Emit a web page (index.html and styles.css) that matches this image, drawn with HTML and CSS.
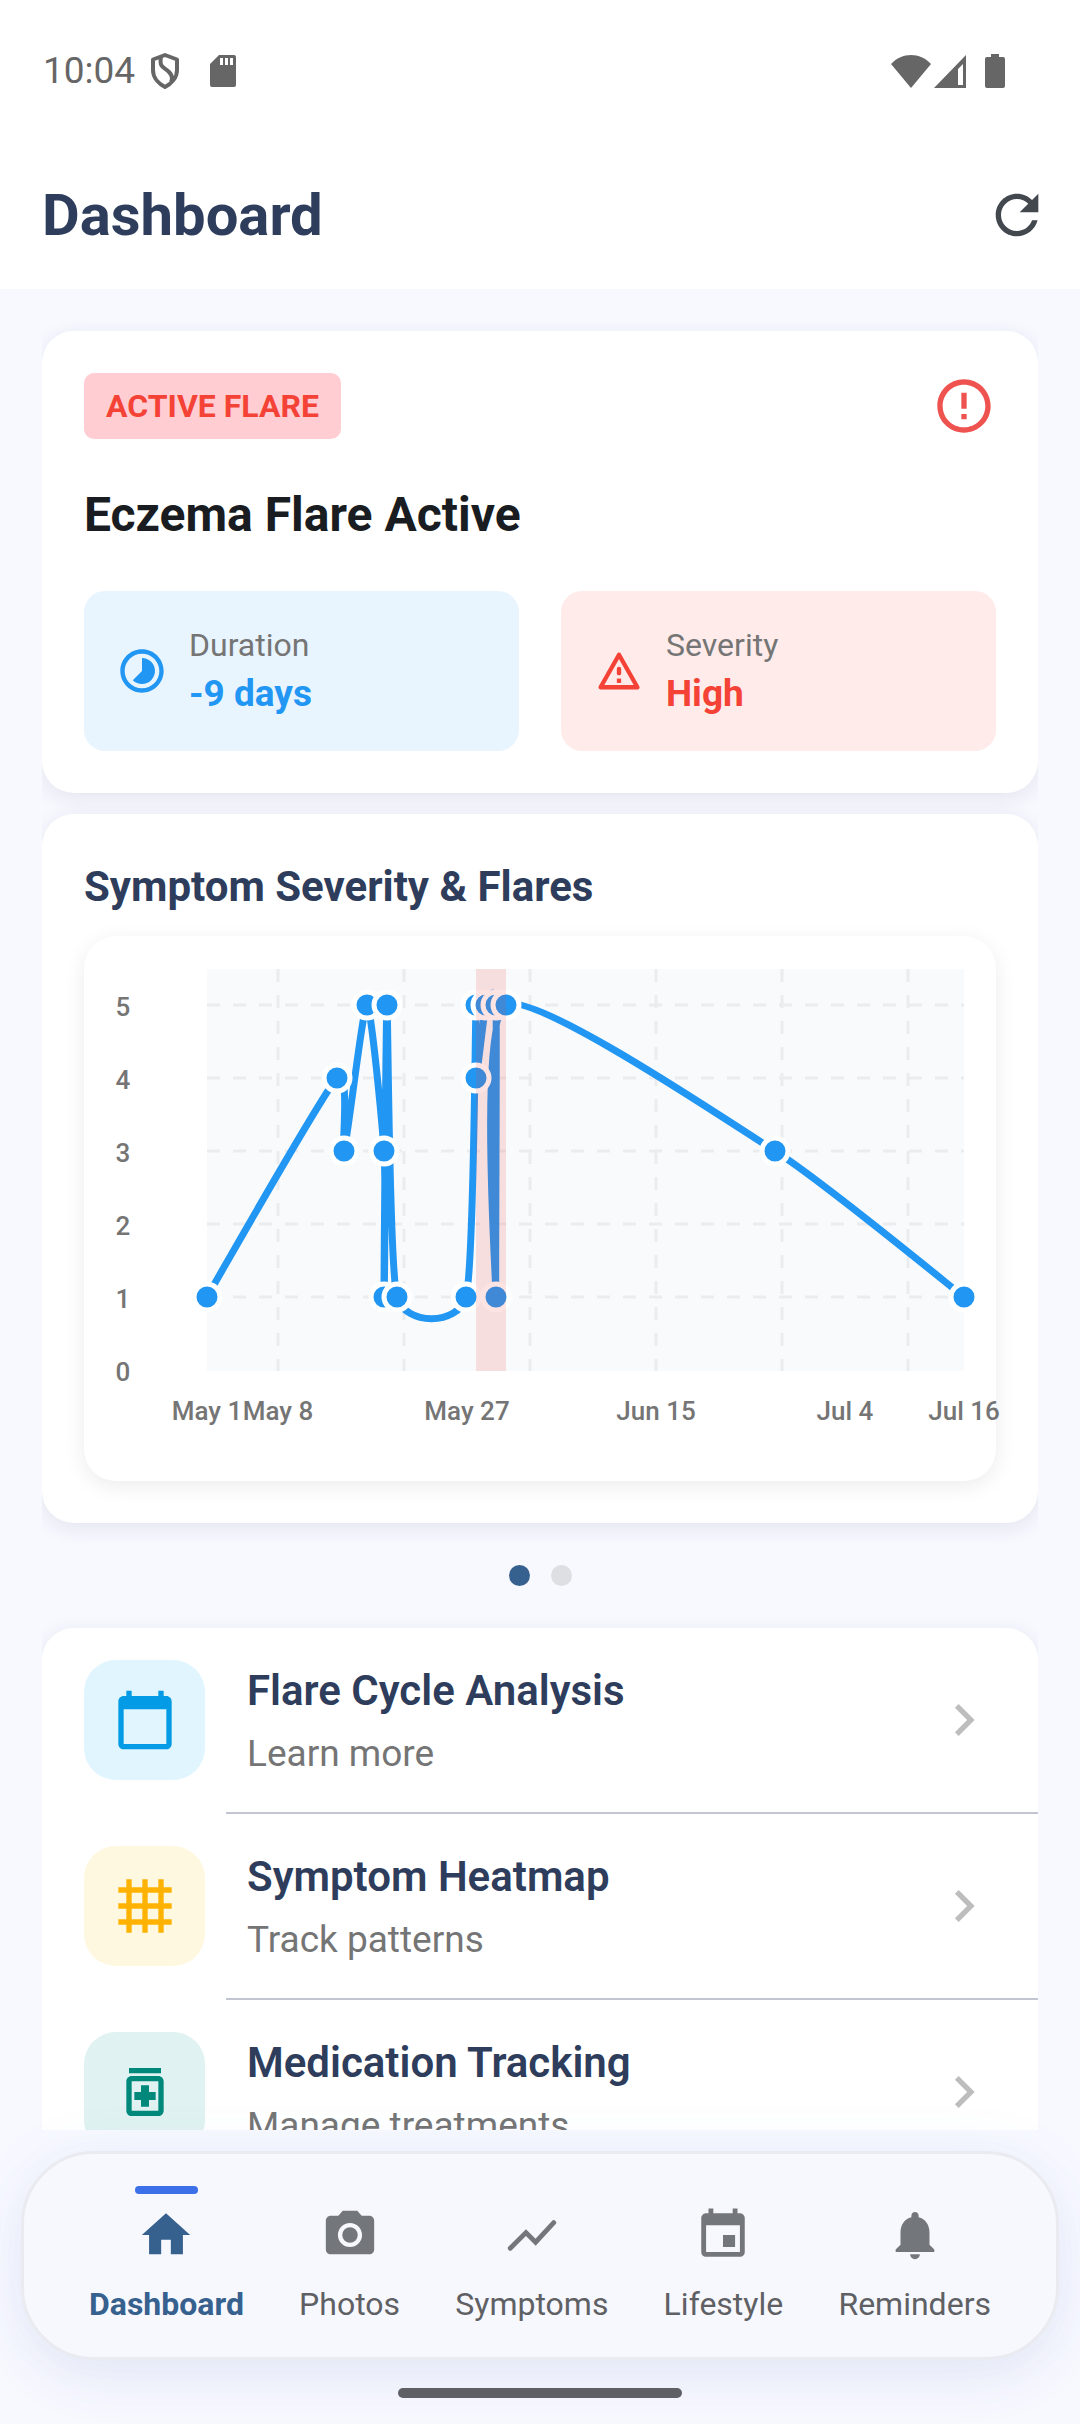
FILE: index.html
```html
<!DOCTYPE html>
<html lang="en">
<head>
<meta charset="utf-8">
<meta name="viewport" content="width=device-width, initial-scale=1">
<title>Dashboard</title>
<link rel="stylesheet" href="styles.css">
</head>
<body>
<header class="top">
  <div class="status">
    <span class="status-time">10:04</span>
    <svg class="status-shield" viewBox="0 0 30 36" aria-hidden="true"><path d="M15 2 27 6.500V17c0 8-6 14-12 17C9 31 3 25 3 17V6.500zM11 4c-2 11 3 10 8 15 3 3 4 6 2 10" fill="none" stroke="currentColor" stroke-width="4" stroke-linejoin="round"/></svg>
    <svg class="status-sd" viewBox="0 0 26 32" aria-hidden="true"><path fill="currentColor" fill-rule="evenodd" d="M9 0h15a2 2 0 0 1 2 2v28a2 2 0 0 1-2 2H2a2 2 0 0 1-2-2V9zM10 3v7h3V3zM15 3v7h3V3zM20 3v7h3V3z"/></svg>
    <span class="status-space"></span>
    <svg class="status-wifi" viewBox="0 0 40 33" aria-hidden="true"><path fill="currentColor" d="M20 33 0 9C11-3 29-3 40 9z"/></svg>
    <svg class="status-signal" viewBox="0 0 32 33" aria-hidden="true"><path fill="currentColor" fill-rule="evenodd" d="M0 33 32 0v33zM24 14v16h5V9z"/></svg>
    <svg class="status-battery" viewBox="0 0 20 34" aria-hidden="true"><path fill="currentColor" d="M6 0h8v3h4a2 2 0 0 1 2 2v27a2 2 0 0 1-2 2H2a2 2 0 0 1-2-2V5a2 2 0 0 1 2-2h4z"/></svg>
  </div>
  <div class="app-bar">
    <h1 class="app-title">Dashboard</h1>
    <button class="icon-button" type="button" aria-label="Refresh">
      <svg class="icon-lg" viewBox="0 0 24 24"><path fill="currentColor" d="M17.650 6.350C16.200 4.900 14.210 4 12 4c-4.420 0-7.990 3.580-7.990 8s3.570 8 7.990 8c3.730 0 6.840-2.550 7.730-6h-2.080c-.82 2.330-3.040 4-5.650 4-3.310 0-6-2.690-6-6s2.690-6 6-6c1.660 0 3.140.69 4.220 1.780L13 11h7V4z"/></svg>
    </button>
  </div>
</header>

<main class="content">
  <section class="card flare">
    <div class="flare-head">
      <span class="badge">ACTIVE FLARE</span>
      <svg class="icon-lg flare-alert" viewBox="0 0 24 24" aria-hidden="true"><path fill="currentColor" d="M11 15h2v2h-2zm0-8h2v6h-2zm.99-5C6.470 2 2 6.480 2 12s4.470 10 9.990 10C17.520 22 22 17.520 22 12S17.520 2 11.990 2zM12 20c-4.420 0-8-3.580-8-8s3.580-8 8-8 8 3.580 8 8-3.580 8-8 8z"/></svg>
    </div>
    <h2 class="flare-title">Eczema Flare Active</h2>
    <div class="stats">
      <div class="stat stat-duration">
        <svg class="icon-md" viewBox="0 0 24 24" aria-hidden="true"><path fill="currentColor" d="M16.240 7.760C15.070 6.590 13.540 6 12 6v6l-4.240 4.240c2.340 2.340 6.140 2.340 8.490 0 2.340-2.340 2.340-6.140-.01-8.480zM12 2C6.480 2 2 6.480 2 12s4.480 10 10 10 10-4.480 10-10S17.520 2 12 2zm0 18c-4.420 0-8-3.580-8-8s3.580-8 8-8 8 3.580 8 8-3.580 8-8 8z"/></svg>
        <div class="stat-text"><span class="stat-label">Duration</span><strong class="stat-value">-9 days</strong></div>
      </div>
      <div class="stat stat-severity">
        <svg class="icon-md" viewBox="0 0 24 24" aria-hidden="true"><path d="M12 4.500 20.500 19.500h-17z" fill="none" stroke="currentColor" stroke-width="2" stroke-linejoin="round"/><path d="M12 11v2" stroke="currentColor" stroke-width="2" stroke-linecap="round"/><path fill="currentColor" d="M11 15.500h2v2h-2z"/></svg>
        <div class="stat-text"><span class="stat-label">Severity</span><strong class="stat-value">High</strong></div>
      </div>
    </div>
  </section>

  <section class="card trend">
    <h2 class="trend-title">Symptom Severity &amp; Flares</h2>
    <svg class="chart" viewBox="0 0 912 545" role="img" aria-label="Symptom severity from May 1 to Jul 16">
      <rect class="plot" x="123" y="33" width="757" height="402"/>
      <path class="grid" d="M123 69H880M123 142H880M123 215H880M123 288H880M123 361H880M194 33V435M320 33V435M446 33V435M572 33V435M698 33V435M824 33V435"/>
      <path class="line" d="M123 361C123 361 239 157 253 142C267 127 257 222 260 215C263 208 279 69 283 69C287 69 298 186 300 215C302 244 300 392 300 361C300 346 302 69 303 69C304 69 305 332 313 361C321 390 374 390 382 361C390 332 391 91 392 69C393 47 391 142 392 142C393 142 400 76 402 69C404 62 411 46 412 69C413 98 411 361 412 361C413 361 394 84 422 69C450 54 645 186 691 215C737 244 861 346 880 361"/>
      <g class="points">
        <circle cx="123" cy="361" r="13"/><circle cx="253" cy="142" r="13"/><circle cx="260" cy="215" r="13"/><circle cx="283" cy="69" r="13"/><circle cx="300" cy="215" r="13"/><circle cx="300" cy="361" r="13"/><circle cx="303" cy="69" r="13"/><circle cx="313" cy="361" r="13"/><circle cx="382" cy="361" r="13"/><circle cx="392" cy="69" r="13"/><circle cx="392" cy="142" r="13"/><circle cx="402" cy="69" r="13"/><circle cx="412" cy="69" r="13"/><circle cx="412" cy="361" r="13"/><circle cx="422" cy="69" r="13"/><circle cx="691" cy="215" r="13"/><circle cx="880" cy="361" r="13"/>
      </g>
      <rect class="flare-band" x="392" y="33" width="30" height="402"/>
      <g class="axis axis-y">
        <text x="39" y="80">5</text><text x="39" y="153">4</text><text x="39" y="226">3</text><text x="39" y="299">2</text><text x="39" y="372">1</text><text x="39" y="445">0</text>
      </g>
      <g class="axis axis-x">
        <text x="123" y="484">May 1</text><text x="194" y="484">May 8</text><text x="383" y="484">May 27</text><text x="572" y="484">Jun 15</text><text x="761" y="484">Jul 4</text><text x="880" y="484">Jul 16</text>
      </g>
    </svg>
  </section>

  <div class="pager" aria-hidden="true"><span class="page-dot page-dot-on"></span><span class="page-dot"></span></div>

  <nav class="card links" aria-label="Tools">
    <a class="link" href="#cycle">
      <span class="tile tile-blue"><svg class="icon-lg" viewBox="0 0 24 24" aria-hidden="true"><path fill="currentColor" d="M20 3h-1V1h-2v2H7V1H5v2H4c-1.100 0-2 .9-2 2v16c0 1.100.9 2 2 2h16c1.100 0 2-.9 2-2V5c0-1.100-.9-2-2-2zm0 18H4V8h16z"/></svg></span>
      <span class="link-text"><span class="link-title">Flare Cycle Analysis</span><span class="link-sub">Learn more</span></span>
      <svg class="icon-lg chevron" viewBox="0 0 24 24" aria-hidden="true"><path fill="currentColor" d="M10 6 8.590 7.410 13.170 12l-4.580 4.590L10 18l6-6z"/></svg>
    </a>
    <a class="link" href="#heatmap">
      <span class="tile tile-amber"><svg class="icon-lg" viewBox="0 0 24 24" aria-hidden="true"><path fill="currentColor" d="M22 7V5h-3V2h-2v3h-4V2h-2v3H7V2H5v3H2v2h3v4H2v2h3v4H2v2h3v3h2v-3h4v3h2v-3h4v3h2v-3h3v-2h-3v-4h3v-2h-3V7zM7 7h4v4H7zm0 10v-4h4v4zm10 0h-4v-4h4zm0-6h-4V7h4z"/></svg></span>
      <span class="link-text"><span class="link-title">Symptom Heatmap</span><span class="link-sub">Track patterns</span></span>
      <svg class="icon-lg chevron" viewBox="0 0 24 24" aria-hidden="true"><path fill="currentColor" d="M10 6 8.590 7.410 13.170 12l-4.580 4.590L10 18l6-6z"/></svg>
    </a>
    <a class="link" href="#medication">
      <span class="tile tile-teal"><svg class="icon-lg" viewBox="0 0 24 24" aria-hidden="true"><path fill="currentColor" d="M6 3h12v2H6zm11 3H7c-1.100 0-2 .9-2 2v11c0 1.100.9 2 2 2h10c1.100 0 2-.9 2-2V8c0-1.100-.9-2-2-2zm0 13H7V8h10zM10.500 17.500h3V15H16v-3h-2.500V9.500h-3V12H8v3h2.500z"/></svg></span>
      <span class="link-text"><span class="link-title">Medication Tracking</span><span class="link-sub">Manage treatments</span></span>
      <svg class="icon-lg chevron" viewBox="0 0 24 24" aria-hidden="true"><path fill="currentColor" d="M10 6 8.590 7.410 13.170 12l-4.580 4.590L10 18l6-6z"/></svg>
    </a>
  </nav>
</main>

<footer class="bottom">
  <nav class="tabs" aria-label="Main">
    <a class="tab tab-on" href="#dashboard" aria-current="page"><svg class="icon-tab" viewBox="0 0 24 24" aria-hidden="true"><path fill="currentColor" d="M10 20v-6h4v6h5v-8h3L12 3 2 12h3v8z"/></svg>Dashboard</a>
    <a class="tab" href="#photos"><svg class="icon-tab" viewBox="0 0 24 24" aria-hidden="true"><circle cx="12" cy="12" r="3.200" fill="currentColor"/><path fill="currentColor" d="M9 2 7.170 4H4c-1.100 0-2 .9-2 2v12c0 1.100.9 2 2 2h16c1.100 0 2-.9 2-2V6c0-1.100-.9-2-2-2h-3.170L15 2zm3 15c-2.760 0-5-2.240-5-5s2.240-5 5-5 5 2.240 5 5-2.240 5-5 5z"/></svg>Photos</a>
    <a class="tab" href="#symptoms"><svg class="icon-tab" viewBox="0 0 24 24" aria-hidden="true"><path d="M3 17.500 9.500 11l4 4L21 6.900" fill="none" stroke="currentColor" stroke-width="2" stroke-linecap="round"/></svg>Symptoms</a>
    <a class="tab" href="#lifestyle"><svg class="icon-tab" viewBox="0 0 24 24" aria-hidden="true"><path fill="currentColor" d="M17 12h-5v5h5zM16 1v2H8V1H6v2H5c-1.110 0-1.990.9-1.990 2L3 19c0 1.100.89 2 2 2h14c1.100 0 2-.9 2-2V5c0-1.100-.9-2-2-2h-1V1zm3 18H5V8h14z"/></svg>Lifestyle</a>
    <a class="tab" href="#reminders"><svg class="icon-tab" viewBox="0 0 24 24" aria-hidden="true"><path fill="currentColor" d="M12 22c1.100 0 2-.9 2-2h-4c0 1.100.89 2 2 2zm6-6v-5c0-3.070-1.640-5.640-4.500-6.320V4c0-.83-.67-1.500-1.500-1.500s-1.500.67-1.500 1.500v.68C7.630 5.360 6 7.920 6 11v5l-2 2v1h16v-1z"/></svg>Reminders</a>
  </nav>
  <div class="home-bar"></div>
</footer>
</body>
</html>
```
FILE: styles.css
```css
* { box-sizing: border-box; }

body {
  margin: 0;
  height: 100vh;
  display: flex;
  flex-direction: column;
  background: #f8f9ff;
  color: #191c20;
  font-family: Roboto, "Noto Sans", sans-serif;
  font-size: 37px;
  line-height: 44px;
}

h1, h2 { margin: 0; }
a { color: inherit; text-decoration: none; }
svg { display: block; flex: none; }

.icon-md { width: 52px; height: 52px; }
.icon-lg { width: 64px; height: 64px; }
.icon-tab { width: 58px; height: 58px; }

/* Header */
.top { flex: none; background: #fff; }

.status {
  display: flex;
  align-items: center;
  height: 142px;
  padding: 0 75px 0 43px;
  color: #666;
}
.status-time { margin-right: 15px; }
.status-shield { width: 30px; height: 36px; margin-right: 30px; }
.status-sd { width: 26px; height: 32px; }
.status-space { flex: 1; }
.status-wifi { width: 40px; height: 33px; margin-right: 3px; }
.status-signal { width: 32px; height: 33px; margin-right: 19px; }
.status-battery { width: 20px; height: 34px; }

.app-bar {
  display: flex;
  align-items: center;
  justify-content: space-between;
  height: 147px;
  padding: 0 31px 2px 42px;
}
.app-title {
  color: #2e3d5c;
  font-size: 58px;
  line-height: 68px;
  font-weight: 700;
}
.icon-button {
  padding: 0;
  border: 0;
  background: none;
  color: #43474e;
}

/* Scrolling content */
.content {
  flex: 1;
  min-height: 0;
  overflow-y: auto;
  scrollbar-width: none;
  padding: 42px 42px 0;
}

.card {
  background: #fff;
  border-radius: 32px;
  box-shadow: 0 5px 20px rgba(40, 40, 80, 0.1);
  clip-path: inset(-30px 0);
}

.flare {
  display: flex;
  flex-direction: column;
  gap: 48px;
  padding: 42px;
  margin-bottom: 21px;
}
.flare-head {
  display: flex;
  align-items: center;
  justify-content: space-between;
}
.badge {
  padding: 14px 22px;
  border-radius: 10px;
  background: #ffcdd2;
  color: #f44336;
  font-size: 32px;
  line-height: 38px;
  font-weight: 700;
}
.flare-alert { color: #ef5350; }
.flare-title {
  font-size: 48px;
  line-height: 56px;
  font-weight: 700;
}

.stats {
  display: grid;
  grid-template-columns: 1fr 1fr;
  gap: 42px;
}
.stat {
  display: flex;
  align-items: center;
  gap: 21px;
  padding: 35px 32px;
  border-radius: 21px;
}
.stat-duration { background: #e8f4fe; color: #2196f3; }
.stat-severity { background: #feebea; color: #f44336; }
.stat-text { display: flex; flex-direction: column; gap: 8px; }
.stat-label { color: #757575; font-size: 32px; line-height: 38px; }
.stat-value { font-weight: 700; }

/* Chart */
.trend {
  display: flex;
  flex-direction: column;
  gap: 18px;
  padding: 42px;
}
.trend-title {
  color: #2e3d5c;
  font-size: 42px;
  line-height: 62px;
  font-weight: 700;
}
.chart {
  width: 100%;
  overflow: visible;
  border-radius: 32px;
  background: #fff;
  box-shadow: 0 5px 21px rgba(0, 0, 0, 0.08);
}
.plot { fill: #f8fafc; }
.grid { fill: none; stroke: #ebecee; stroke-width: 3; stroke-dasharray: 13 13; }
.line { fill: none; stroke: #2196f3; stroke-width: 7; }
.points { fill: #2196f3; stroke: #fff; stroke-width: 5; }
.flare-band { fill: #f44336; fill-opacity: 0.15; }
.axis { fill: #757575; font-size: 26px; font-weight: 500; text-anchor: middle; }

.pager {
  display: flex;
  justify-content: center;
  gap: 21px;
  padding: 42px 0;
}
.page-dot {
  width: 21px;
  height: 21px;
  border-radius: 50%;
  background: #dedfe3;
}
.page-dot-on { background: #36618e; }

/* Link list */
.link {
  display: flex;
  align-items: center;
  gap: 42px;
  padding: 32px 42px;
  position: relative;
}
.link + .link { margin-top: 2px; }
.link + .link::before {
  content: "";
  position: absolute;
  left: 184px;
  right: 0;
  top: -2px;
  height: 2px;
  background: #c3c6d0;
}
.tile {
  display: grid;
  place-items: center;
  width: 121px;
  height: 120px;
  border-radius: 32px;
}
.tile-blue { background: #e1f5fe; color: #039be5; }
.tile-amber { background: #fff8e1; color: #ffb300; }
.tile-teal { background: #e0f2f1; color: #00897b; }
.link-text {
  flex: 1;
  display: flex;
  flex-direction: column;
  gap: 16px;
  padding-top: 2px;
}
.link-title {
  color: #2e3d5c;
  font-size: 42px;
  line-height: 50px;
  font-weight: 600;
}
.link-sub { color: #757575; }
.chevron { color: #bdbdbd; }

/* Bottom navigation */
.bottom {
  flex: none;
  display: flex;
  flex-direction: column;
  align-items: center;
  gap: 28px;
  padding: 21px 21px 26px;
  position: relative;
}
.tabs {
  align-self: stretch;
  display: flex;
  justify-content: space-between;
  padding: 32px 65px 34px;
  border: 3px solid #eaebf0;
  border-radius: 73px;
  background: #f6f8fe;
  box-shadow: 0 21px 52px rgba(60, 90, 150, 0.08), 0 0 63px rgba(90, 140, 240, 0.06);
}
.tab {
  display: flex;
  flex-direction: column;
  align-items: center;
  color: #5f6064;
  font-size: 32px;
  line-height: 38px;
}
.tab::before {
  content: "";
  width: 63px;
  height: 8px;
  margin-bottom: 12px;
  border-radius: 4px;
}
.icon-tab { margin-bottom: 21px; color: #73767b; }
.tab-on { color: #36618e; font-weight: 700; }
.tab-on::before { background: #3b70e8; }
.tab-on .icon-tab { color: #36618e; }
.home-bar {
  width: 284px;
  height: 10px;
  border-radius: 5px;
  background: #5f6064;
}
```
